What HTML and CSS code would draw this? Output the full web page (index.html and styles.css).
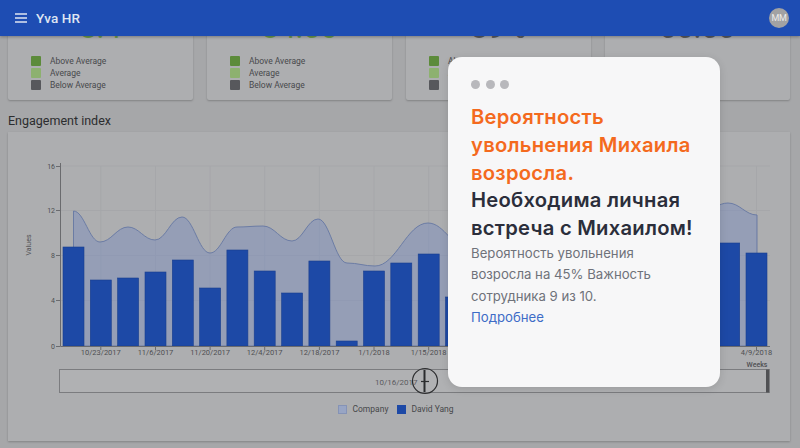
FILE: index.html
```html
<!DOCTYPE html>
<html lang="ru">
<head>
<meta charset="utf-8">
<title>Yva HR</title>
<link rel="stylesheet" href="styles.css">
</head>
<body>
<header class="appbar">
  <span class="menu">
    <svg width="12" height="10" viewBox="0 0 12 10"><path d="M0 1h12M0 5h12M0 9h12" stroke="#dfe5f2" stroke-width="1.6"/></svg>
  </span>
  <span class="brand">Yva HR</span>
  <span class="avatar">MM</span>
</header>

<main class="page">
  <div class="content">
    <section class="stats">
      <div class="stat-card">
        <div class="stat-value green">8.4</div>
        <ul class="stat-legend">
          <li><i class="sw sw-above"></i>Above Average</li>
          <li><i class="sw sw-avg"></i>Average</li>
          <li><i class="sw sw-below"></i>Below Average</li>
        </ul>
      </div>
      <div class="stat-card">
        <div class="stat-value green">84.06</div>
        <ul class="stat-legend">
          <li><i class="sw sw-above"></i>Above Average</li>
          <li><i class="sw sw-avg"></i>Average</li>
          <li><i class="sw sw-below"></i>Below Average</li>
        </ul>
      </div>
      <div class="stat-card">
        <div class="stat-value dark">89%</div>
        <ul class="stat-legend">
          <li><i class="sw sw-above"></i>Above Average</li>
          <li><i class="sw sw-avg"></i>Average</li>
          <li><i class="sw sw-below"></i>Below Average</li>
        </ul>
      </div>
      <div class="stat-card">
        <div class="stat-value dark">00.00</div>
      </div>
    </section>

    <h2 class="section-title">Engagement index</h2>

    <section class="chart-card">
      <svg class="chart" width="782" height="264" viewBox="8 132 782 264">
        <g class="grid" stroke="#a6a7aa" stroke-width="1">
          <path d="M60 166H770M60 210.5H770M60 255.5H770M60 300.5H770"/>
          <path d="M100.8 166V346M155.5 166V346M210.1 166V346M264.7 166V346M319.4 166V346M374 166V346M428.7 166V346M483.3 166V346M538 166V346M592.6 166V346M647.2 166V346M701.9 166V346M756.5 166V346"/>
        </g>
        <path class="area" d="M73.5 211 C84.1 211 89.4 242 100 242 C111.2 242 116.8 227 128 227 C138.8 227 144.2 240 155 240 C165.8 240 171.2 217 182 217 C193.2 217 198.8 253 210 253 C220.8 253 226.2 227 237 227 C247.4 227 252.6 226 263 226 C274.6 226 280.4 241 292 241 C302.4 241 307.6 219 318 219 C329.6 219 335.4 263 347 263 C358.2 263 363.8 266 375 266 C396.2 266 406.8 223 428 223 C444.8 223 453.2 250 470 250 C494 250 506 228 530 228 C552 228 563 242 585 242 C607 242 618 224 640 224 C656 224 664 232 680 232 C699.2 232 708.8 203 728 203 C739.6 203 745.4 215 757 215 L757 346 L73.5 346 Z"/>
        <g class="bars">
          <rect x="63" y="247" width="21" height="99"/>
          <rect x="90.3" y="280" width="21" height="66"/>
          <rect x="117.6" y="278" width="21" height="68"/>
          <rect x="145" y="272" width="21" height="74"/>
          <rect x="172.3" y="260" width="21" height="86"/>
          <rect x="199.6" y="288" width="21" height="58"/>
          <rect x="226.9" y="250" width="21" height="96"/>
          <rect x="254.2" y="271" width="21" height="75"/>
          <rect x="281.6" y="293" width="21" height="53"/>
          <rect x="308.9" y="261" width="21" height="85"/>
          <rect x="336.2" y="341" width="21" height="5"/>
          <rect x="363.5" y="271" width="21" height="75"/>
          <rect x="390.8" y="263" width="21" height="83"/>
          <rect x="418.2" y="254" width="21" height="92"/>
          <rect x="445.5" y="297" width="21" height="49"/>
          <rect x="472.8" y="262" width="21" height="84"/>
          <rect x="500.1" y="270" width="21" height="76"/>
          <rect x="527.4" y="255" width="21" height="91"/>
          <rect x="554.8" y="280" width="21" height="66"/>
          <rect x="582.1" y="265" width="21" height="81"/>
          <rect x="609.4" y="250" width="21" height="96"/>
          <rect x="636.7" y="275" width="21" height="71"/>
          <rect x="664" y="258" width="21" height="88"/>
          <rect x="691.4" y="248" width="21" height="98"/>
          <rect x="718.7" y="243" width="21" height="103"/>
          <rect x="746" y="253" width="21" height="93"/>
        </g>
        <g class="axis" stroke="#6a6b6e" stroke-width="1" fill="none">
          <path d="M60.5 163V346.5H770"/>
          <path d="M56 166.5h4M56 210.5h4M56 255.5h4M56 300.5h4M56 346.5h4"/>
          <path d="M100.8 346v4M155.5 346v4M210.1 346v4M264.7 346v4M319.4 346v4M374 346v4M428.7 346v4M483.3 346v4M538 346v4M592.6 346v4M647.2 346v4M701.9 346v4M756.5 346v4"/>
        </g>
        <g class="ylabels" text-anchor="end">
          <text x="55" y="169">16</text>
          <text x="55" y="213">12</text>
          <text x="55" y="258">8</text>
          <text x="55" y="303">4</text>
          <text x="55" y="349">0</text>
        </g>
        <text class="axis-title" transform="translate(31 245) rotate(-90)" text-anchor="middle">Values</text>
        <g class="xlabels" text-anchor="middle">
          <text x="100.8" y="355">10/23/2017</text>
          <text x="155.5" y="355">11/6/2017</text>
          <text x="210.1" y="355">11/20/2017</text>
          <text x="264.7" y="355">12/4/2017</text>
          <text x="319.4" y="355">12/18/2017</text>
          <text x="374" y="355">1/1/2018</text>
          <text x="428.7" y="355">1/15/2018</text>
          <text x="483.3" y="355">1/29/2018</text>
          <text x="538" y="355">2/12/2018</text>
          <text x="592.6" y="355">2/26/2018</text>
          <text x="647.2" y="355">3/12/2018</text>
          <text x="701.9" y="355">3/26/2018</text>
          <text x="756.5" y="355">4/9/2018</text>
        </g>
        <text class="axis-title weeks" x="757" y="367" text-anchor="middle">Weeks</text>
        <rect class="navigator" x="59.5" y="369.5" width="710" height="23"/>
        <rect x="766" y="369.5" width="3" height="23" fill="#505154"/>
        <text class="nav-label" x="375" y="384.5">10/16/2017</text>
        <g class="touch" fill="none" stroke="#2b2c2e">
          <circle cx="425" cy="381" r="12.5" stroke-width="1.2"/>
          <path d="M424.5 370v22" stroke-width="2"/>
          <path d="M421 381.5h8" stroke-width="1.2"/>
        </g>
      </svg>
      <div class="legend">
        <span class="legend-item"><i class="lg lg-company"></i>Company</span>
        <span class="legend-item"><i class="lg lg-person"></i>David Yang</span>
      </div>
    </section>
  </div>
</main>

<div class="popup">
  <div class="dots"><i></i><i></i><i></i></div>
  <h1 class="popup-title"><span class="accent">Вероятность увольнения Михаила возросла.</span><span class="call">Необходима личная встреча с Михаилом!</span></h1>
  <p class="popup-text">Вероятность увольнения возросла на 45% Важность сотрудника 9 из 10.</p>
  <a class="popup-link" href="#">Подробнее</a>
</div>
</body>
</html>
```

FILE: styles.css
```css
* { box-sizing: border-box; }
html, body { margin: 0; padding: 0; }
body {
  width: 800px;
  height: 448px;
  overflow: hidden;
  background: #a6a7a9;
  font-family: Roboto, "Liberation Sans", sans-serif;
  color: #333;
  position: relative;
}

.appbar {
  height: 36px;
  background: #1e4db3;
  display: flex;
  align-items: center;
  padding: 0 11px 0 15px;
  position: relative;
  z-index: 2;
  box-shadow: 0 1px 3px rgba(0,0,0,0.3);
}
.menu { display: flex; width: 12px; height: 10px; margin-right: 9px; }
.brand { color: #dfe5f2; font-size: 13.5px; font-weight: 500; letter-spacing: 0.1px; }
.avatar {
  margin-left: auto;
  width: 20px; height: 20px;
  border-radius: 50%;
  background: #a2a2a3;
  color: #ececec;
  font-size: 9px;
  display: flex; align-items: center; justify-content: center;
  letter-spacing: -0.3px;
}

.page { height: 412px; overflow: hidden; }
.content { padding: 0 10px 0 8px; margin-top: -31px; }

.stats {
  display: grid;
  grid-template-columns: repeat(4, 1fr);
  gap: 14px;
}
.stat-card {
  background: #adaeb0;
  height: 95px;
  padding: 6px 0 9px 23px;
  box-shadow: 0 1px 2px rgba(0,0,0,0.22);
  border-radius: 2px;
}
.stat-value {
  height: 34px;
  line-height: 34px;
  font-size: 30px;
  text-align: center;
  padding-right: 23px;
}
.stat-value.green { color: #6e9b4c; }
.stat-value.dark { color: #5b5c5f; }
.stat-legend {
  list-style: none;
  margin: 10px 0 0;
  padding: 0;
}
.stat-legend li {
  display: flex;
  align-items: center;
  height: 12px;
  font-size: 8.5px;
  color: #48494c;
}
.sw { display: block; width: 10px; height: 10px; border-radius: 1px; margin-right: 9px; }
.sw-above { background: #5c8b3a; }
.sw-avg { background: #8db16f; }
.sw-below { background: #57585c; }

.section-title {
  margin: 12px 0 2px 0;
  font-size: 12.5px;
  line-height: 18px;
  font-weight: 400;
  color: #2c2d2f;
}

.chart-card {
  background: #adaeb0;
  width: 782px;
  height: 309px;
  box-shadow: 0 1px 2px rgba(0,0,0,0.22);
}
.chart { display: block; }
.area { fill: rgba(120, 140, 190, 0.45); stroke: #6577a3; stroke-width: 0.9; }
.bars rect { fill: #1d49a6; stroke: #1a3f8e; stroke-width: 0.6; }
.ylabels text, .xlabels text, .axis-title, .nav-label {
  font-family: Roboto, "Liberation Sans", sans-serif;
  fill: #4e4f52;
}
.ylabels text { font-size: 7px; }
.xlabels text { font-size: 7.5px; }
.axis-title { font-size: 7px; }
.weeks { font-weight: 500; }
.nav-label { font-size: 8px; fill: #5a5b5e; }
.navigator { fill: #b0b1b3; stroke: #7b7c7f; stroke-width: 1; }

.legend {
  display: flex;
  justify-content: center;
  gap: 9px;
  margin-top: 7px;
  padding-right: 6px;
}
.legend-item {
  display: flex;
  align-items: center;
  font-size: 8.5px;
  color: #47484b;
  height: 12px;
}
.lg { display: block; width: 9px; height: 9px; margin-right: 5px; border: 1px solid; }
.lg-company { background: #98a5c4; border-color: #8593b6; }
.lg-person { background: #1d49a6; border-color: #1d49a6; }

.popup {
  position: absolute;
  left: 448px;
  top: 57px;
  width: 272px;
  height: 330px;
  background: #f7f7f8;
  border-radius: 14px;
  padding: 23px 16px 0 23px;
  z-index: 5;
  box-shadow: 0 2px 8px rgba(0,0,0,0.12);
  font-family: Inter, "Noto Sans", sans-serif;
}
.dots { display: flex; gap: 5.5px; height: 9px; }
.dots i { display: block; width: 9px; height: 9px; border-radius: 50%; background: #b8b8bc; }
.popup-title {
  margin: 14px 0 0;
  font-size: 20.2px;
  line-height: 27.8px;
  font-weight: 600;
  letter-spacing: 0.25px;
  color: #2b2e3b;
}
.popup-title span { display: block; }
.popup-title .accent { color: #f46a1e; }
.popup-text {
  max-width: 205px;
  margin: 1px 0 0;
  font-size: 13.2px;
  line-height: 21.5px;
  color: #6f727a;
}
.popup-link {
  display: block;
  font-size: 13.2px;
  line-height: 21px;
  color: #3d6cc7;
  text-decoration: none;
}
```
